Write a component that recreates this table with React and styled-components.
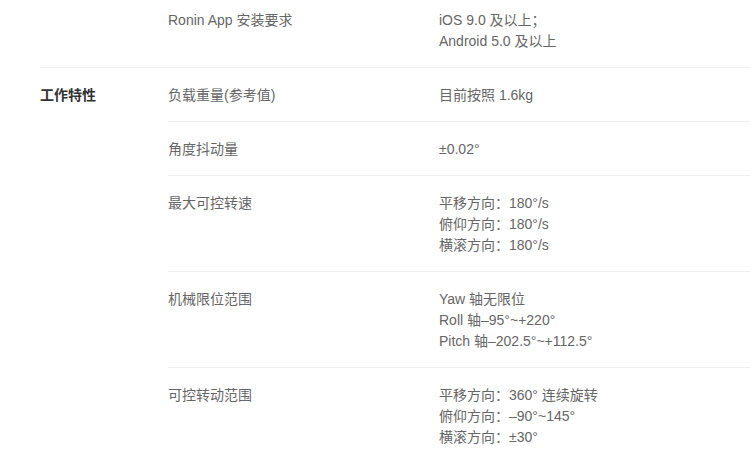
import React from "react";
import styled, { createGlobalStyle } from "styled-components";

const Global = createGlobalStyle`
  html, body { margin: 0; padding: 0; background: #ffffff; }
  body {
    font-family: "Liberation Sans", "Noto Sans CJK SC", sans-serif;
    -webkit-font-smoothing: antialiased;
  }
`;

const Page = styled.div`
  margin-top: -7px;
  padding-left: 40px;
  background: #fff;
`;

const Section = styled.section`
  display: grid;
  grid-template-columns: 128px 1fr;
  border-bottom: 1px solid #efefef;
`;

const GroupTitle = styled.h3`
  margin: 0;
  padding-top: 17px;
  font-size: 14px;
  line-height: 21px;
  font-weight: 700;
  color: #333333;
`;

const Rows = styled.div`
  display: flex;
  flex-direction: column;
`;

const Row = styled.div`
  display: grid;
  grid-template-columns: 271px 1fr;
  padding: 17px 0 15px;
  border-bottom: 1px solid #efefef;
  &:last-child { border-bottom: none; }
`;

const Label = styled.div`
  font-size: 14px;
  line-height: 21px;
  color: #666666;
`;

const Value = styled.div`
  display: flex;
  flex-direction: column;
  font-size: 14px;
  line-height: 21px;
  color: #666666;
`;

const sections = [
  {
    title: "",
    rows: [
      { label: "Ronin App 安装要求", values: ["iOS 9.0 及以上；", "Android 5.0 及以上"] },
    ],
  },
  {
    title: "工作特性",
    rows: [
      { label: "负载重量(参考值)", values: ["目前按照 1.6kg"] },
      { label: "角度抖动量", values: ["±0.02°"] },
      { label: "最大可控转速", values: ["平移方向：180°/s", "俯仰方向：180°/s", "横滚方向：180°/s"] },
      { label: "机械限位范围", values: ["Yaw 轴无限位", "Roll 轴–95°~+220°", "Pitch 轴–202.5°~+112.5°"] },
      { label: "可控转动范围", values: ["平移方向：360° 连续旋转", "俯仰方向：–90°~145°", "横滚方向：±30°"] },
    ],
  },
];

export default function App() {
  return (
    <>
      <Global />
      <Page>
        {sections.map((s, i) => (
          <Section key={i}>
            <GroupTitle>{s.title}</GroupTitle>
            <Rows>
              {s.rows.map((r) => (
                <Row key={r.label}>
                  <Label>{r.label}</Label>
                  <Value>
                    {r.values.map((v) => (
                      <span key={v}>{v}</span>
                    ))}
                  </Value>
                </Row>
              ))}
            </Rows>
          </Section>
        ))}
      </Page>
    </>
  );
}
